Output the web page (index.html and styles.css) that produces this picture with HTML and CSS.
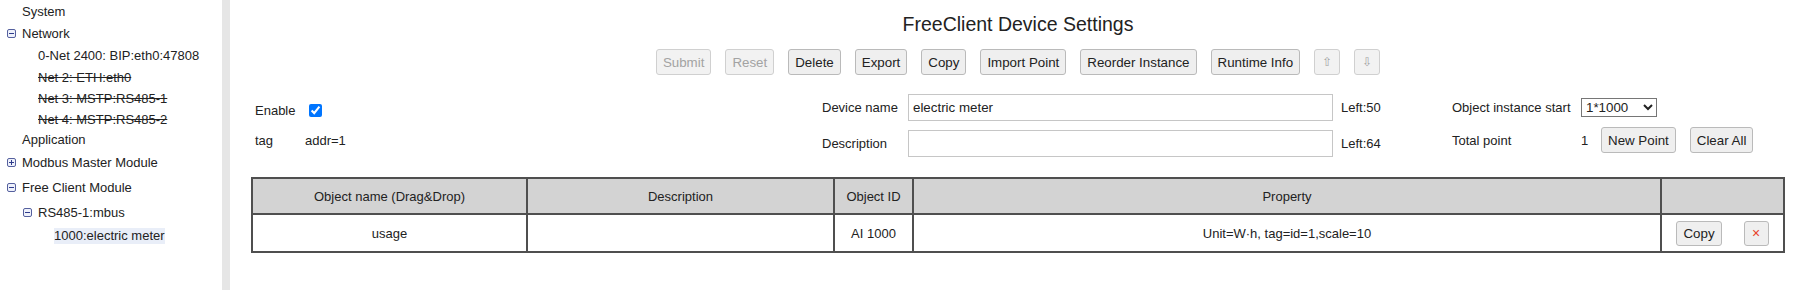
FILE: index.html
```html
<!DOCTYPE html>
<html lang="en">
<head>
    <meta charset="UTF-8">
    <title>FreeClient Device Settings</title>
    <link rel="stylesheet" href="styles.css">
</head>
<body>
    <div class="sidebar">
        <ul class="tree">
            <li class="node lvl0 h22">System</li>
            <li class="node lvl0 has-icon h22">
                <svg class="toggle" width="9" height="9" viewBox="0 0 9 9"><rect x="0.5" y="0.5" width="8" height="8" rx="1.5" fill="#eef1fb" stroke="#55609e"/><line x1="2" y1="4.5" x2="7" y2="4.5" stroke="#2f3c8c"/></svg>
                <span>Network</span>
            </li>
            <li class="node lvl1 h23">0-Net 2400: BIP:eth0:47808</li>
            <li class="node lvl1 off">Net 2: ETH:eth0</li>
            <li class="node lvl1 off">Net 3: MSTP:RS485-1</li>
            <li class="node lvl1 off h20">Net 4: MSTP:RS485-2</li>
            <li class="node lvl0">Application</li>
            <li class="node lvl0 has-icon h24">
                <svg class="toggle" width="9" height="9" viewBox="0 0 9 9"><rect x="0.5" y="0.5" width="8" height="8" rx="1.5" fill="#eef1fb" stroke="#55609e"/><line x1="2" y1="4.5" x2="7" y2="4.5" stroke="#2f3c8c"/><line x1="4.5" y1="2" x2="4.5" y2="7" stroke="#2f3c8c"/></svg>
                <span>Modbus Master Module</span>
            </li>
            <li class="node lvl0 has-icon h26">
                <svg class="toggle" width="9" height="9" viewBox="0 0 9 9"><rect x="0.5" y="0.5" width="8" height="8" rx="1.5" fill="#eef1fb" stroke="#55609e"/><line x1="2" y1="4.5" x2="7" y2="4.5" stroke="#2f3c8c"/></svg>
                <span>Free Client Module</span>
            </li>
            <li class="node lvl1 has-icon h24">
                <svg class="toggle" width="9" height="9" viewBox="0 0 9 9"><rect x="0.5" y="0.5" width="8" height="8" rx="1.5" fill="#eef1fb" stroke="#55609e"/><line x1="2" y1="4.5" x2="7" y2="4.5" stroke="#2f3c8c"/></svg>
                <span>RS485-1:mbus</span>
            </li>
            <li class="node lvl2 h24"><span class="selected">1000:electric meter</span></li>
        </ul>
    </div>

    <div class="main">
        <h1 class="title">FreeClient Device Settings</h1>

        <div class="toolbar">
            <button disabled>Submit</button>
            <button disabled>Reset</button>
            <button>Delete</button>
            <button>Export</button>
            <button>Copy</button>
            <button>Import Point</button>
            <button>Reorder Instance</button>
            <button>Runtime Info</button>
            <button class="arrow" disabled>&#8679;</button>
            <button class="arrow" disabled>&#8681;</button>
        </div>

        <div class="settings-form">
            <div class="form-group general">
                <span>Enable</span>
                <span><input type="checkbox" checked></span>
                <span>tag</span>
                <span>addr=1</span>
            </div>

            <div class="form-group naming">
                <span>Device name</span>
                <input type="text" class="text-field" value="electric meter">
                <span class="hint">Left:50</span>
                <span>Description</span>
                <input type="text" class="text-field" value="">
                <span class="hint">Left:64</span>
            </div>

            <div class="form-group instances">
                <span>Object instance start</span>
                <span>
                    <select class="instance-select">
                        <option>1*1000</option>
                    </select>
                </span>
                <span>Total point</span>
                <span class="point-tools">
                    <span>1</span>
                    <button>New Point</button>
                    <button>Clear All</button>
                </span>
            </div>
        </div>

        <table class="points">
            <colgroup>
                <col style="width: 275px">
                <col style="width: 307px">
                <col style="width: 79px">
                <col style="width: 748px">
                <col style="width: 123px">
            </colgroup>
            <thead>
                <tr>
                    <th>Object name (Drag&amp;Drop)</th>
                    <th>Description</th>
                    <th>Object ID</th>
                    <th>Property</th>
                    <th></th>
                </tr>
            </thead>
            <tbody>
                <tr>
                    <td>usage</td>
                    <td></td>
                    <td>AI 1000</td>
                    <td>Unit=W·h, tag=id=1,scale=10</td>
                    <td>
                        <div class="row-actions">
                            <button>Copy</button>
                            <button class="remove">&times;</button>
                        </div>
                    </td>
                </tr>
            </tbody>
        </table>
    </div>
</body>
</html>
```

FILE: styles.css
```css
body {
    margin: 0;
    display: flex;
    height: 290px;
    font-family: 'Liberation Sans', Arial, sans-serif;
    font-size: 13px;
    color: #222;
    background: #fff;
    overflow: hidden;
}

/* left tree */
.sidebar {
    width: 222px;
    flex-shrink: 0;
    border-right: 8px solid #e6e6e6;
}

.tree {
    list-style: none;
    margin: 0;
    padding: 0;
}

.node {
    display: flex;
    align-items: center;
    height: 21px;
    white-space: nowrap;
}

.node.h20 { height: 20px; }
.node.h22 { height: 22px; }
.node.h23 { height: 23px; }
.node.h24 { height: 24px; }
.node.h26 { height: 26px; }

.lvl0 { padding-left: 22px; }
.lvl1 { padding-left: 38px; }
.lvl2 { padding-left: 54px; }

.lvl0.has-icon { padding-left: 7px; }
.lvl1.has-icon { padding-left: 23px; }

.toggle {
    margin-right: 6px;
    flex-shrink: 0;
}

.off {
    text-decoration: line-through;
}

.selected {
    background: #e9eef8;
    line-height: 16px;
}

/* main panel */
.main {
    flex: 1;
    padding-left: 10px;
    display: flex;
    flex-direction: column;
}

.title {
    margin: 13px 0 0;
    font-size: 19.5px;
    font-weight: normal;
    line-height: 22px;
    text-align: center;
}

button {
    font-family: 'Liberation Sans', Arial, sans-serif;
    font-size: 13.33px;
    color: #222;
    height: 26px;
    padding: 0 6px;
    background: #efefef;
    border: 1px solid #bababa;
    border-radius: 3px;
    box-sizing: border-box;
}

button:disabled {
    color: #a3a3a3;
    border-color: #d0d0d0;
    background: #f2f2f2;
}

.toolbar {
    margin-top: 14px;
    display: flex;
    justify-content: center;
    gap: 14px;
}

.toolbar .arrow {
    width: 26px;
    padding: 0;
    font-size: 12px;
}

/* settings form, three groups side by side */
.settings-form {
    margin: 19px 0 0 15px;
    display: flex;
    align-items: flex-start;
    white-space: nowrap;
}

.form-group {
    display: grid;
    grid-auto-rows: 27px;
    align-items: center;
}

.general {
    grid-template-columns: 50px 517px;
    row-gap: 2.5px;
    margin-top: 3px;
}

.naming {
    grid-template-columns: 86px 425px 119px;
    row-gap: 9px;
}

.instances {
    grid-template-columns: 129px auto;
    row-gap: 5.5px;
}

.form-group input[type=checkbox] {
    vertical-align: middle;
}

.text-field {
    height: 27px;
    box-sizing: border-box;
    border: 1px solid #c6c6c6;
    padding: 0 4px;
    font-family: 'Liberation Sans', Arial, sans-serif;
    font-size: 13.33px;
    color: #222;
}

.hint {
    padding-left: 8px;
}

.instance-select {
    width: 76px;
    height: 19px;
    font-family: 'Liberation Sans', Arial, sans-serif;
    font-size: 13.33px;
    border: 1px solid #767676;
    border-radius: 0;
    background: #fff;
    color: #222;
}

.point-tools {
    display: flex;
    align-items: center;
    gap: 14px;
}

.point-tools span {
    width: 6px;
}

/* point table */
.points {
    margin: 20px 11px 0;
    width: 1532px;
    table-layout: fixed;
    border-collapse: collapse;
    border: 2px solid #4f4f4f;
}

.points th,
.points td {
    border: 2px solid #4f4f4f;
    text-align: center;
    font-weight: normal;
    padding: 0 4px;
}

.points th {
    background: #d3d3d3;
    height: 34px;
}

.points td {
    height: 36px;
}

.row-actions {
    display: flex;
    justify-content: center;
    gap: 22px;
}

.row-actions button {
    height: 25px;
}

.row-actions .remove {
    width: 25px;
    padding: 0;
    color: #e8402a;
    font-size: 14px;
}
```
